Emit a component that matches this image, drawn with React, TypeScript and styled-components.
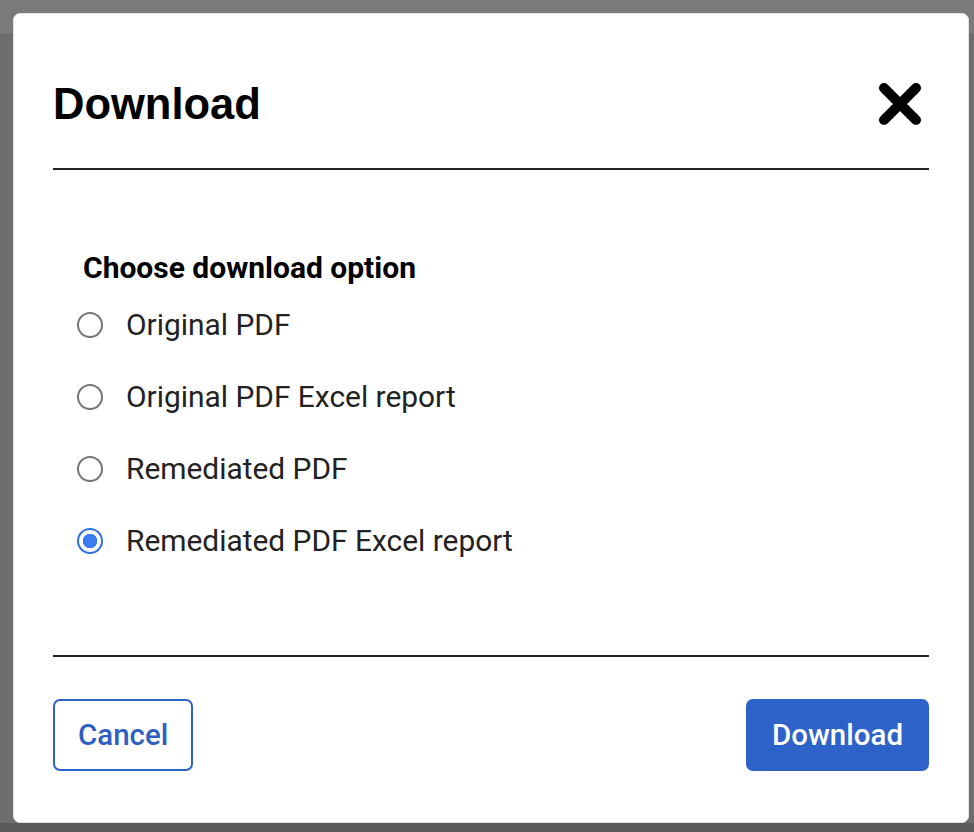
import { useState } from "react";
import styled, { createGlobalStyle } from "styled-components";

const GlobalStyle = createGlobalStyle`
    html, body {
        margin: 0;
        padding: 0;
        background: #6d6d6d;
        font-family: Roboto, "Liberation Sans", Arial, sans-serif;
    }
`;

const Page = styled.div`
    position: relative;
    width: 974px;
    height: 832px;
    overflow: hidden;
    background: #6d6d6d;
`;

const PageTopBar = styled.div`
    height: 33px;
    background: #7b7b7b;
    border-bottom: 1px solid #727272;
`;

const PageBottom = styled.div`
    position: absolute;
    left: 0;
    right: 0;
    bottom: 0;
    height: 9px;
    background: #595959;
`;

const Modal = styled.div`
    position: absolute;
    top: 13px;
    left: 13px;
    width: 956px;
    height: 810px;
    box-sizing: border-box;
    background: #ffffff;
    border: 1px solid #e2e2e2;
    border-radius: 7px;
    display: flex;
    flex-direction: column;
    padding: 0 39px;
`;

const Header = styled.div`
    display: flex;
    align-items: center;
    justify-content: space-between;
    padding-top: 65px;
    padding-bottom: 39px;
    border-bottom: 2px solid #222;
`;

const Title = styled.h2`
    margin: 0;
    font: 700 43.5px/50px "Liberation Sans", Arial, sans-serif;
    color: #000;
`;

const CloseButton = styled.button`
    display: flex;
    align-items: center;
    justify-content: center;
    width: 44px;
    height: 44px;
    padding: 0;
    margin-right: 7px;
    border: none;
    background: transparent;
    cursor: pointer;
`;

const Body = styled.div`
    display: flex;
    flex-direction: column;
    padding: 81px 0 78px 24px;
    border-bottom: 2px solid #222;
`;

const Legend = styled.div`
    margin: 0 0 4px 6px;
    font: 700 30px/34px Roboto, sans-serif;
    color: #000;
`;

const OptionRow = styled.label`
    display: flex;
    align-items: center;
    gap: 23px;
    height: 72px;
    cursor: pointer;
`;

const Radio = styled.input.attrs({ type: "radio" })`
    appearance: none;
    margin: 0;
    width: 26px;
    height: 26px;
    box-sizing: border-box;
    border-radius: 50%;
    border: 2px solid #767676;
    background: #fff;
    cursor: pointer;

    &:checked {
        border: 2.5px solid #2f6fe0;
        background: radial-gradient(circle, #3a7bf0 0 7px, #fff 7.5px);
    }
`;

const OptionText = styled.span`
    font: 400 29.9px/34px Roboto, sans-serif;
    color: #222;
`;

const Footer = styled.div`
    display: flex;
    justify-content: space-between;
    padding-top: 42px;
`;

const Button = styled.button<{ $primary?: boolean }>`
    height: 72px;
    box-sizing: border-box;
    padding: 0 ${({ $primary }) => ($primary ? "24px" : "23px")};
    border-radius: 7px;
    border: 2px solid #2d62c8;
    background: ${({ $primary }) => ($primary ? "#2d62c8" : "#fff")};
    color: ${({ $primary }) => ($primary ? "#fff" : "#2d5fc2")};
    font: 500 29.5px Roboto, sans-serif;
    cursor: pointer;
`;

const options = [
    "Original PDF",
    "Original PDF Excel report",
    "Remediated PDF",
    "Remediated PDF Excel report",
];

export default function App() {
    const [choice, setChoice] = useState(3);

    return (
        <>
            <GlobalStyle />
            <Page>
                <PageTopBar />
                <PageBottom />
                <Modal role="dialog" aria-labelledby="dl-title">
                    <Header>
                        <Title id="dl-title">Download</Title>
                        <CloseButton aria-label="Close">
                            <svg width="44" height="44" viewBox="0 0 44 44">
                                <path
                                    d="M6 6 L38 38 M38 6 L6 38"
                                    stroke="#000"
                                    strokeWidth="10"
                                    strokeLinecap="round"
                                />
                            </svg>
                        </CloseButton>
                    </Header>
                    <Body>
                        <Legend>Choose download option</Legend>
                        {options.map((label, i) => (
                            <OptionRow key={label}>
                                <Radio name="download" checked={choice === i} onChange={() => setChoice(i)} />
                                <OptionText>{label}</OptionText>
                            </OptionRow>
                        ))}
                    </Body>
                    <Footer>
                        <Button>Cancel</Button>
                        <Button $primary>Download</Button>
                    </Footer>
                </Modal>
            </Page>
        </>
    );
}
